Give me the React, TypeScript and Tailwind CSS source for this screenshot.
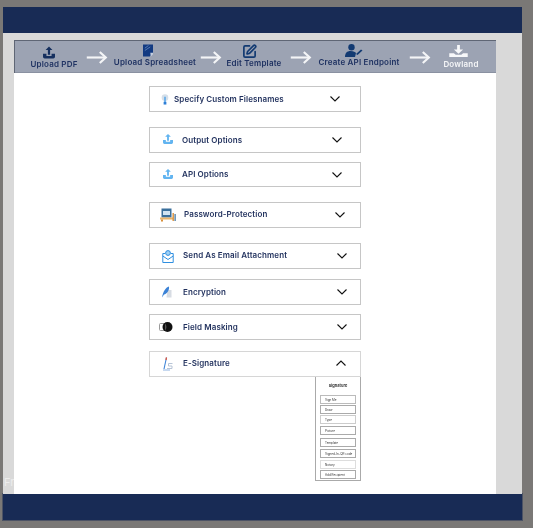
import React from "react";
import { SquarePen } from "lucide-react";

const font = { fontFamily: '"Inter", "Noto Sans", sans-serif' };

const Arrow = ({ className }: { className: string }) => (
  <svg viewBox="0 0 22 14" className={className} fill="none" stroke="#f4f5f7" strokeWidth="2.300">
    <path d="M0 7h20" />
    <path d="M14 1l6.500 6-6.500 6" />
  </svg>
);

const Chevron = ({ up = false, className }: { up?: boolean; className: string }) => (
  <svg viewBox="0 0 10 6" className={className} fill="none" stroke="#111" strokeWidth="1.100">
    <path d={up ? "M.5 5.500L5 1l4.500 4.500" : "M.5.5L5 5 9.500.5"} />
  </svg>
);

const UploadTray = ({ color, className }: { color: string; className: string }) => (
  <svg viewBox="0 0 14 14" className={className} fill={color}>
    <path d="M7 0L11 4H8.300V9.500H5.700V4H3z" />
    <path d="M0 8.500h4V11h6V8.500h4V12a2 2 0 0 1-2 2H2a2 2 0 0 1-2-2z" />
  </svg>
);

const BulbIcon = () => (
  <svg viewBox="0 0 8 12" className="h-[11px] w-[8px]">
    <circle cx="4" cy="4" r="3.600" fill="#d5dfe9" />
    <rect x="3.300" y="3" width="1.400" height="6" fill="#3f9be8" />
    <rect x="2.500" y="8.500" width="3" height="3" fill="#2f7fd6" />
  </svg>
);

const LockScreenIcon = () => (
  <svg viewBox="0 0 16 14" className="h-[14px] w-[16px]">
    <rect x="1.500" y="0.500" width="10" height="9" fill="#3a6f9b" />
    <rect x="3" y="3" width="7" height="4" fill="#cfe3f2" />
    <rect x="0" y="9.500" width="13" height="2" fill="#e8b46a" />
    <rect x="12.500" y="5" width="1.400" height="8" fill="#d9903a" />
    <rect x="14.500" y="6" width="1.200" height="7" fill="#3a6f9b" />
    <rect x="1" y="11.500" width="2" height="2" fill="#d9903a" />
  </svg>
);

const MailIcon = () => (
  <svg viewBox="0 0 12 13" className="h-[13px] w-[12px]" fill="none" stroke="#2f8fe0">
    <path d="M3 3.500H.8v9h10.400v-9H9" />
    <path d="M.8 6L6 9.500 11.200 6" />
    <circle cx="6" cy="3" r="2.400" fill="#9fd0f5" />
  </svg>
);

const FeatherIcon = () => (
  <svg viewBox="0 0 10 12" className="h-[12px] w-[10px]">
    <path d="M5.500 4H9.500V11.500H4.500z" fill="#d7dce3" />
    <path d="M0 11.500C1 6 3.500 1.500 7 .5 7.500 4 5 8 2 8.500z" fill="#3b82d6" />
  </svg>
);

const MaskIcon = () => (
  <svg viewBox="0 0 14 10" className="h-[10px] w-[14px]">
    <rect x="0.500" y="1.500" width="7" height="7" rx="1" fill="#fff" stroke="#999" />
    <circle cx="8.500" cy="5" r="5" fill="#111" />
    <path d="M6 1.500A5 5 0 0 1 6 8.500z" fill="#555" />
  </svg>
);

const SignIcon = () => (
  <svg viewBox="0 0 10 14" className="h-[14px] w-[10px]" fill="none">
    <path d="M3.500 0.500L1 12" stroke="#3b82d6" strokeWidth="1.100" />
    <path d="M3.500 0.500L3 3" stroke="#e2553c" strokeWidth="1.300" />
    <path d="M9.500 6.500H5.500V9H9V11.500H4" stroke="#b7c4d6" />
    <path d="M0 13h7" stroke="#8fb4e2" />
  </svg>
);

const rows = [
  { label: "Specify Custom Filesnames", icon: <BulbIcon />, box: "mt-[13px] h-[26px] pl-[7px]", gap: "ml-[1px]", chev: "mr-[20px]" },
  { label: "Output Options", icon: <UploadTray color="#62b4f0" className="mb-[2px] h-[10px] w-[12px]" />, box: "mt-[15px] h-[26px] pl-[10px]", gap: "ml-[6px]", chev: "mr-[18px]" },
  { label: "API Options", icon: <UploadTray color="#62b4f0" className="mb-[2px] h-[10px] w-[12px]" />, box: "mt-[9px] h-[25px] pl-[10px]", gap: "mb-[1px] ml-[6px]", chev: "mr-[18px]" },
  { label: "Password-Protection", icon: <LockScreenIcon />, box: "mt-[15px] h-[26px] pl-[10px]", gap: "mb-[2px] ml-[8px]", chev: "mr-[15px]" },
  { label: "Send As Email Attachment", icon: <MailIcon />, box: "mt-[15px] h-[26px] pl-[10px]", gap: "mb-[2px] ml-[7px]", chev: "mr-[13px]" },
  { label: "Encryption", icon: <FeatherIcon />, box: "mt-[10px] h-[26px] pl-[9px]", gap: "ml-[8px]", chev: "mr-[13px]" },
  { label: "Field Masking", icon: <MaskIcon />, box: "mt-[9px] h-[26px] pl-[8px]", gap: "mb-[1px] ml-[9px]", chev: "mr-[13px]" },
];

const steps = [
  { label: "Upload PDF", box: "ml-[4px] w-[70px] pt-[5px] text-[#1f3262]", text: "mt-[0px]", icon: <UploadTray color="#16305f" className="mr-[10px] h-[13px] w-[12px]" /> },
  { label: "Upload Spreadsheet", box: "ml-[2px] w-[90px] pt-[3px] text-[#1f3262]", text: "mt-[0px]", icon: (
    <svg viewBox="0 0 11 13" className="mr-[14px] h-[13px] w-[10px]">
      <path d="M0 0h11v9l-3.500 4H0z" fill="#123a82" />
      <path d="M2 4l4-3M2 6.500l6-4" stroke="#7fa0d0" strokeWidth=".7" />
      <path d="M8 9h3v1.500L8.500 13z" fill="#c5cfe0" />
    </svg>
  ) },
  { label: "Edit Template", box: "ml-[1px] w-[62px] pt-[3px] text-[#1f3262]", text: "mt-[-1px]", icon: <SquarePen size={15} strokeWidth={2.7} color="#123a72" className="mr-[10px]" /> },
  { label: "Create API Endpoint", box: "ml-[2px] w-[90px] pt-[3px] text-[#1f3262]", text: "mt-[0px]", icon: (
    <svg viewBox="0 0 18 13" className="mr-[11px] h-[13px] w-[18px]" fill="#123a72">
      <circle cx="6.500" cy="3.200" r="3.200" />
      <path d="M0 13c0-4 2-6 5.500-6S10 8 11 9l-1 4z" />
      <path d="M11 10l5-4.500 1.500 1L12.500 11z" />
    </svg>
  ) },
  { label: "Dowland", box: "ml-[8px] w-[44px] pt-[4px] text-[#f5f6f8]", text: "mt-[2px]", icon: (
    <svg viewBox="0 0 20 13" className="mr-[6px] h-[12px] w-[19px]" fill="#f7f8fa">
      <path d="M8.500 0h3v5H15l-5 4.500L5 5h3.500z" />
      <path d="M0 9h5l2 1.500h6L15 9h5v4H0z" />
    </svg>
  ) },
];

const signatureItems = [
  { label: "Sign Me", box: "mt-0 h-[9px] border-[#bbb]" },
  { label: "Draw", box: "mt-[1px] h-[9px] border-[#aaa]" },
  { label: "Type", box: "mt-[1px] h-[9px] border-[#ccc]" },
  { label: "Picture", box: "mt-[2px] h-[9px] border-[#aaa]" },
  { label: "Template", box: "mt-[3px] h-[9px] border-[#aaa]" },
  { label: "Signed-In-QR code", box: "mt-[2px] h-[9px] border-[#aaa]" },
  { label: "Notary", box: "mt-[2px] h-[9px] border-[#ddd]" },
  { label: "Add Recipient", box: "mt-[1px] h-[9px] border-[#aaa]" },
];

const arrowClasses = ["ml-[-3px] h-[13px] w-[22px]", "ml-0 h-[13px] w-[22px]", "ml-[5px] h-[13px] w-[22px]", "ml-[5px] h-[13px] w-[22px]"];

const App = () => {
  return (
    <div className="h-[528px] w-[533px] overflow-hidden bg-[#7a7876] pl-[3px] pt-[7px]" style={font}>
      <div className="w-[519px]">
        <div className="h-[26px] bg-[#182b55]" />

        {/* Main area */}
        <div className="relative h-[461px] bg-[#d9d9d9] pl-[11px] pt-[7px]">
          <span className="absolute left-[1px] top-[442px] text-[11px] leading-[14px] text-[#ececec]">Fr</span>
          <div className="h-[454px] w-[482px] bg-white blur-[0.35px]">
            {/* Steps */}
            <div className="flex h-[33px] items-start border-l border-t border-[#5f6675] bg-[#9ca3b3] shadow-[inset_0_-1px_0_#8a91a1]">
              {steps.map((step, idx) => (
                <React.Fragment key={step.label}>
                  <div className={`flex shrink-0 flex-col items-center ${step.box}`}>
                    {step.icon}
                    <span className={`whitespace-nowrap text-[8px] font-semibold leading-[10px] tracking-[0.2px] ${step.text}`}>{step.label}</span>
                  </div>
                  {idx < 4 && <Arrow className={`mt-[10px] shrink-0 ${arrowClasses[idx]}`} />}
                </React.Fragment>
              ))}
            </div>

            {/* Accordion */}
            <div className="ml-[135px] w-[212px]">
              {rows.map((row) => (
                <div key={row.label} className={`flex items-center border border-[#c6c6c6] ${row.box}`}>
                  <div className="flex w-[16px] shrink-0 justify-center">{row.icon}</div>
                  <span className={`whitespace-nowrap text-[8px] font-semibold tracking-[0.1px] text-[#1f2f5c] ${row.gap}`}>{row.label}</span>
                  <Chevron className={`ml-auto h-[6px] w-[10px] ${row.chev}`} />
                </div>
              ))}

              <div className="mt-[11px] flex h-[26px] items-center border border-[#d6d6d6] pl-[10px]">
                <div className="flex w-[16px] shrink-0 justify-center"><SignIcon /></div>
                <span className="mb-[2px] ml-[7px] whitespace-nowrap text-[8px] font-semibold tracking-[0.1px] text-[#1f2f5c]">E-Signature</span>
                <Chevron up className="mb-[2px] ml-auto mr-[14px] h-[6px] w-[10px]" />
              </div>

              <div className="ml-[166px] flex h-[104px] w-[46px] flex-col border border-t-0 border-[#aaa] px-[4px]">
                <div className="h-[18px] pt-[5px] text-center text-[4px] font-semibold leading-[8px] text-[#222]">Signature</div>
                {signatureItems.map((item) => (
                  <div key={item.label} className={`flex items-center whitespace-nowrap border pl-[4px] text-[3px] leading-[4px] text-[#333] ${item.box}`}>
                    {item.label}
                  </div>
                ))}
              </div>
            </div>
          </div>
        </div>

        <div className="h-[26px] bg-[#182b55] shadow-[0_0_0_1px_#4c5365]" />
      </div>
    </div>
  );
};

export default App;
